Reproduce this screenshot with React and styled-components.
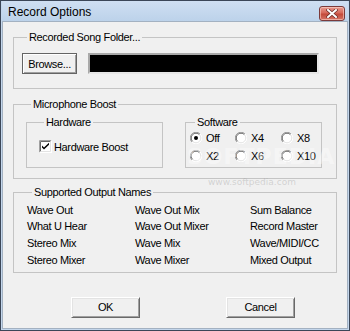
import React from 'react';
import styled, { createGlobalStyle } from 'styled-components';

const Global = createGlobalStyle`
  html, body { margin: 0; padding: 0; background: #ffffff; }
  body {
    width: 350px; height: 331px; overflow: hidden;
    font-family: "Liberation Sans", Arial, sans-serif;
    font-size: 11px; color: #000;
  }
  * { box-sizing: border-box; }
`;

const Window = styled.div`
  position: relative;
  width: 350px;
  height: 331px;
  border: 1px solid #3b4657;
  background: #c3d6ec;
  padding: 0 1px 1px 1px;
  display: flex;
  flex-direction: column;
`;

const TitleBar = styled.div`
  height: 20px;
  display: flex;
  align-items: center;
  justify-content: space-between;
  background: linear-gradient(#cfdff2, #bcd2ea);
  padding: 1px 3px 0 6px;
`;

const Title = styled.span`
  font-family: "Liberation Sans", Arial, sans-serif;
  font-size: 12px;
  color: #000;
`;

const CloseButton = styled.div`
  width: 26px;
  height: 15px;
  margin-top: 3px;
  border: 1px solid #7b3a3a;
  border-radius: 3px;
  background: linear-gradient(#e89b8f 0%, #d6685a 45%, #c34a3a 55%, #d67466 100%);
  display: flex;
  align-items: center;
  justify-content: center;
  box-shadow: inset 0 0 0 1px rgba(255, 220, 210, 0.55);
`;

const Client = styled.div`
  flex: 1;
  background: #f0f0f0;
  border: 1px solid #a3b1c1;
  display: flex;
  flex-direction: column;
  padding: 9px 10px 0 10px;
  letter-spacing: -0.35px;
`;

const Group = styled.fieldset`
  margin: ${p => p.$mt || 0}px 0 0 0;
  border: 1px solid #c4c4c4;
  padding: ${p => p.$pad};
  min-width: 0;
  ${p => p.$w ? `width: ${p.$w}px; flex: none;` : ''}
`;

const Legend = styled.legend`
  padding: 0 2px;
  margin-left: ${p => p.$ml || 5}px;
  line-height: 13px;
  font-size: 11px;
  color: #000;
`;

const Row = styled.div`
  display: flex;
  align-items: center;
  gap: ${p => p.$gap || 0}px;
`;

const ClassicButton = styled.div`
  width: ${p => p.$w}px;
  height: 21px;
  display: flex;
  align-items: center;
  justify-content: center;
  background: #f0f0f0;
  border: 1px solid;
  border-color: ${p => p.$default ? '#646464' : '#ffffff #696969 #696969 #ffffff'};
  box-shadow: ${p => p.$default
    ? 'inset 1px 1px #ffffff, inset -1px -1px #a0a0a0'
    : 'inset 1px 1px #e3e3e3, inset -1px -1px #a0a0a0'};
  font-size: 11px;
`;

const PathField = styled.div`
  width: 231px;
  height: 21px;
  background: #000;
  border: 2px solid;
  border-color: #a9a9a9 #e6e6e6 #e6e6e6 #a9a9a9;
`;

const SubGroups = styled.div`
  display: flex;
  gap: 22px;
  align-items: stretch;
`;

const CheckLabel = styled.label`
  display: flex;
  align-items: center;
  gap: 2px;
  height: 13px;
`;

const RadioGrid = styled.div`
  display: grid;
  grid-template-columns: 45px 46px 1fr;
  grid-auto-rows: 18px;
`;

const RadioItem = styled.label`
  display: flex;
  align-items: center;
  gap: 4px;
`;

const NamesGrid = styled.div`
  display: grid;
  grid-template-columns: 108px 115px 1fr;
  grid-auto-rows: 16.67px;
  align-items: center;
`;

const Name = styled.span`
  line-height: 13px;
  white-space: nowrap;
`;

const Footer = styled.div`
  display: flex;
  gap: 86px;
  padding-left: 58px;
  margin-top: 24px;
`;

const Watermark = styled.div`
  position: absolute;
  left: ${p => p.$x}px;
  top: ${p => p.$y}px;
  font-family: "DejaVu Sans", sans-serif;
  font-size: ${p => p.$size}px;
  font-weight: ${p => p.$bold ? 700 : 400};
  letter-spacing: ${p => p.$ls || 0}px;
  color: ${p => p.$color};
  pointer-events: none;
  white-space: nowrap;
`;

const CloseGlyph = () => (
  <svg width="12" height="9" viewBox="0 0 12 9">
    <path d="M2 1 L10 8 M10 1 L2 8" stroke="#6b2a25" strokeWidth="3.4" strokeLinecap="square" />
    <path d="M2 1 L10 8 M10 1 L2 8" stroke="#ffffff" strokeWidth="2" strokeLinecap="square" />
  </svg>
);

const Checkbox = ({ checked }) => (
  <svg width="13" height="13" viewBox="0 0 13 13">
    <rect x="0" y="0" width="13" height="13" fill="#ffffff" />
    <path d="M0.5 12.5 V0.5 H12.5" stroke="#a0a0a0" fill="none" />
    <path d="M1.5 11.5 V1.5 H11.5" stroke="#696969" fill="none" />
    <path d="M0.5 12.5 H12.5 V0.5" stroke="#ffffff" fill="none" />
    <path d="M1.5 11.5 H11.5 V1.5" stroke="#e3e3e3" fill="none" />
    {checked && (
      <path d="M3 5.5 L5 7.5 L10 2.8 L10 4.8 L5 9.5 L3 7.5 Z" fill="#000" />
    )}
  </svg>
);

const Radio = ({ checked }) => (
  <svg width="12" height="12" viewBox="0 0 12 12">
    <circle cx="6" cy="6" r="5.5" fill="#ffffff" />
    <path d="M1.9 10.1 A5.5 5.5 0 0 1 10.1 1.9" stroke="#a0a0a0" fill="none" />
    <path d="M2.6 9.4 A4.5 4.5 0 0 1 9.4 2.6" stroke="#696969" fill="none" />
    <path d="M10.1 1.9 A5.5 5.5 0 0 1 1.9 10.1" stroke="#ffffff" fill="none" />
    <path d="M9.4 2.6 A4.5 4.5 0 0 1 2.6 9.4" stroke="#e3e3e3" fill="none" />
    {checked && <circle cx="6" cy="6" r="2" fill="#000" />}
  </svg>
);

const radios = [
  ['Off', true], ['X4', false], ['X8', false],
  ['X2', false], ['X6', false], ['X10', false],
];

const names = [
  'Wave Out', 'Wave Out Mix', 'Sum Balance',
  'What U Hear', 'Wave Out Mixer', 'Record Master',
  'Stereo Mix', 'Wave Mix', 'Wave/MIDI/CC',
  'Stereo Mixer', 'Wave Mixer', 'Mixed Output',
];

export default function App() {
  return (
    <>
      <Global />
      <Window>
        <TitleBar>
          <Title>Record Options</Title>
          <CloseButton><CloseGlyph /></CloseButton>
        </TitleBar>
        <Client>
          <Group $pad="9px 8px 14px 8px">
            <Legend>Recorded Song Folder...</Legend>
            <Row $gap={11}>
              <ClassicButton $w={55} $default>Browse...</ClassicButton>
              <PathField />
            </Row>
          </Group>

          <Group $mt={9} $pad="5px 14px 10px 12px">
            <Legend>Microphone Boost</Legend>
            <SubGroups>
              <Group $w={137} $pad="11px 8px 14px 12px">
                <Legend>Hardware</Legend>
                <CheckLabel>
                  <Checkbox checked />
                  <span>Hardware Boost</span>
                </CheckLabel>
              </Group>
              <Group $w={137} $pad="0 4px 2px 4px">
                <Legend>Software</Legend>
                <RadioGrid>
                  {radios.map(([label, on]) => (
                    <RadioItem key={label}>
                      <Radio checked={on} />
                      <span>{label}</span>
                    </RadioItem>
                  ))}
                </RadioGrid>
              </Group>
            </SubGroups>
          </Group>

          <Group $mt={7} $pad="3px 8px 3px 13px">
            <Legend>Supported Output Names</Legend>
            <NamesGrid>
              {names.map(n => <Name key={n}>{n}</Name>)}
            </NamesGrid>
          </Group>

          <Footer>
            <ClassicButton $w={69}>OK</ClassicButton>
            <ClassicButton $w={69}>Cancel</ClassicButton>
          </Footer>
        </Client>
        <Watermark $x={207} $y={176} $size={9} $color="rgba(150,150,150,0.35)">www.softpedia.com</Watermark>
        <Watermark $x={186} $y={143} $size={22} $bold $ls={1} $color="rgba(255,255,255,0.4)">SOFTPEDIA</Watermark>
      </Window>
    </>
  );
}
